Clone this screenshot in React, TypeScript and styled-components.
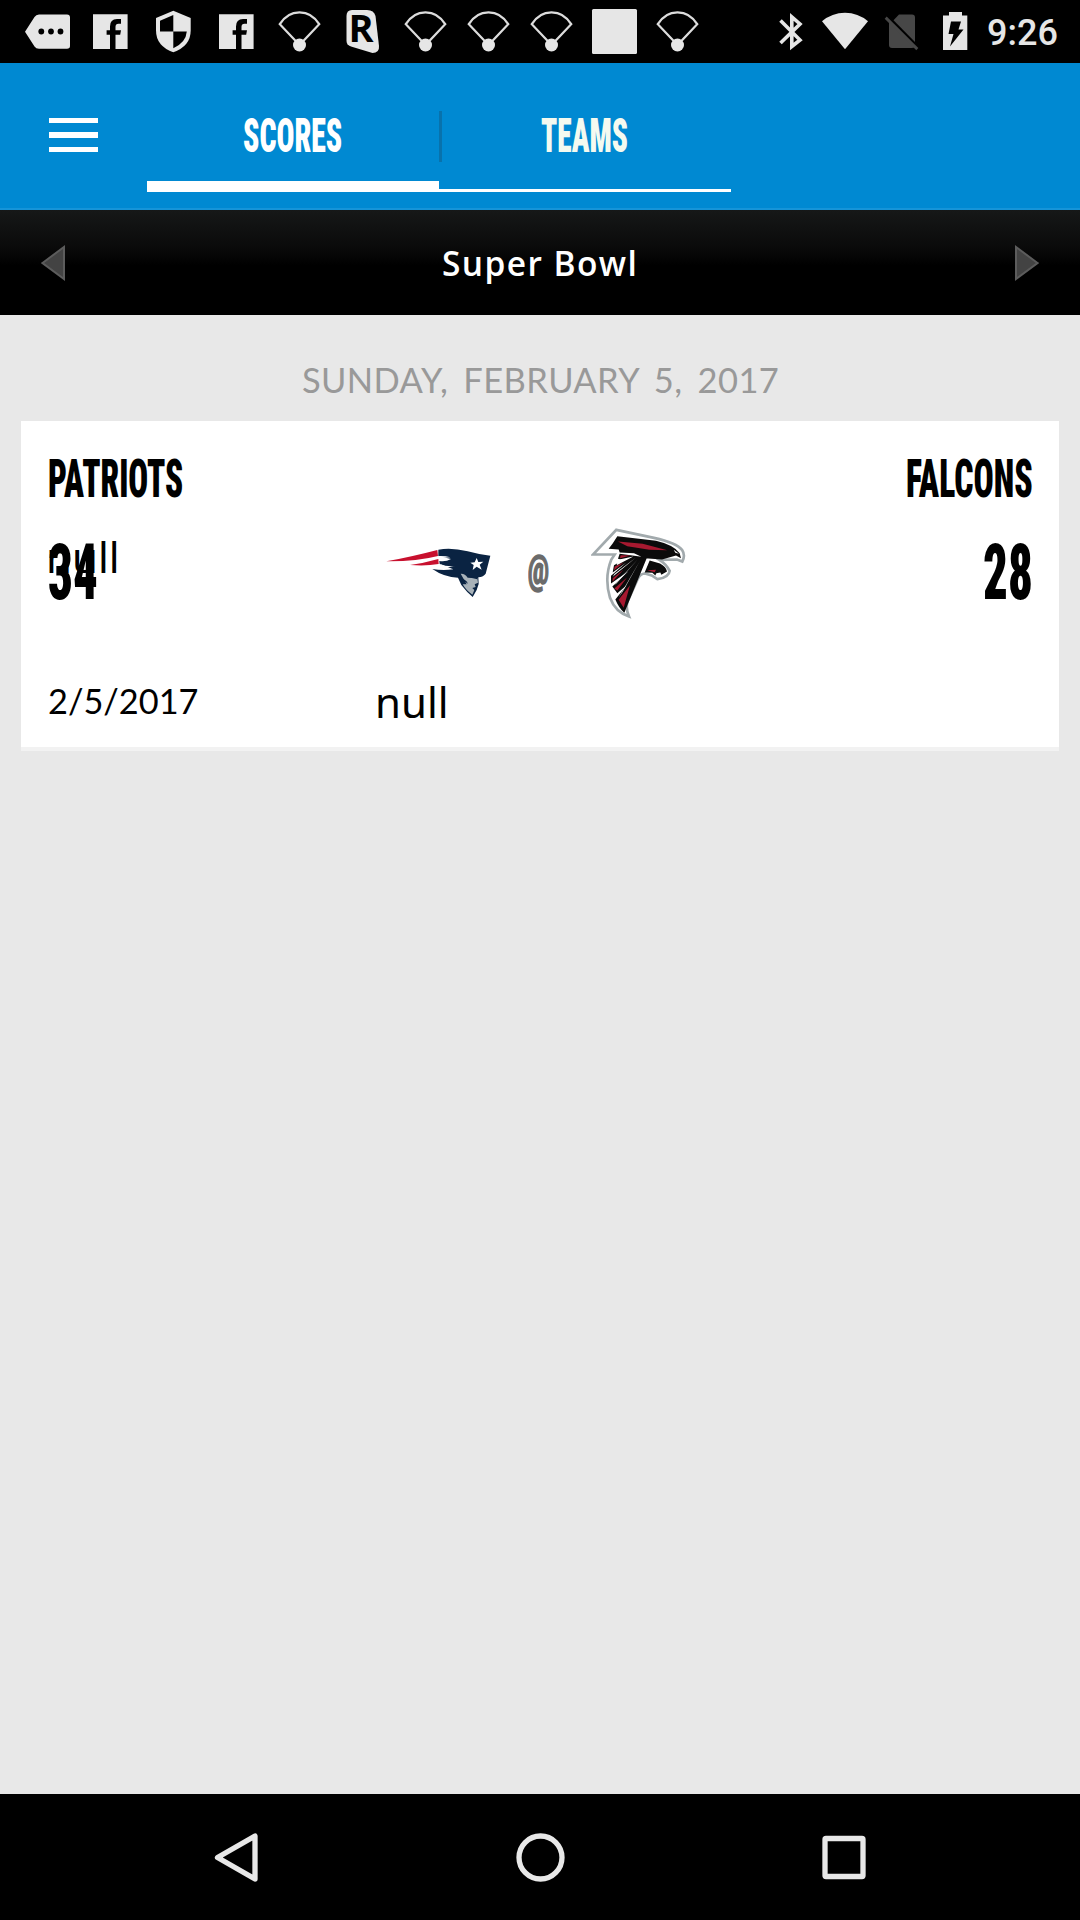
import React, { useLayoutEffect, useRef, useState } from "react";
import styled, { createGlobalStyle } from "styled-components";

const GlobalStyle = createGlobalStyle`
  * { box-sizing: border-box; }
  body { margin: 0; background: #e8e8e8; }
`;

const Screen = styled.div`
  display: flex;
  flex-direction: column;
  width: 1080px;
  height: 1920px;
  overflow: hidden;
  background: #e8e8e8;
  color: #000;
  font-family: Lato, "Open Sans", sans-serif;
`;

/* ---------- condensed text ---------- */

const FitBox = styled.span<{ $width: number }>`
  display: block;
  flex: none;
  width: ${(p) => p.$width}px;
  white-space: nowrap;
`;
const FitInner = styled.span`
  display: inline-block;
  transform-origin: 0 50%;
  vertical-align: top;
`;

/** Squeezes its text horizontally so that it fills the given width. */
function Fit({ width, children }: { width: number; children: string }) {
  const ref = useRef<HTMLSpanElement>(null);
  const [scale, setScale] = useState(1);
  useLayoutEffect(() => {
    if (ref.current) setScale(width / ref.current.offsetWidth);
  }, [width, children]);
  return (
    <FitBox $width={width}>
      <FitInner ref={ref} style={{ transform: `scaleX(${scale})` }}>
        {children}
      </FitInner>
    </FitBox>
  );
}

/* ---------- status bar ---------- */

const StatusBar = styled.div`
  display: flex;
  flex: none;
  justify-content: space-between;
  height: 63px;
  padding: 0 22px 0 16px;
  background: #000;
  color: #e6e6e6;
`;
const StatusGroup = styled.div`
  display: flex;
`;
const StatusIcon = styled.svg`
  display: block;
  flex: none;
  height: 63px;
  fill: #e6e6e6;
`;
const Clock = styled.div`
  margin-left: 19px;
  width: 71px;
  font: 500 37px/66px Roboto, sans-serif;
`;

const Slot = ({ children }: { children: React.ReactNode }) => (
  <StatusIcon width="63" viewBox="0 0 63 63">
    {children}
  </StatusIcon>
);
const MoreIcon = () => (
  <Slot>
    <path d="M9 31.8 18.5 17Q20 14.5 23 14.5H51Q54 14.5 54 17.5V46Q54 48.7 51 48.7H23Q20 48.7 18.5 46.5Z" />
    <g fill="#000">
      <circle cx="25.3" cy="31.5" r="2.9" />
      <circle cx="35" cy="31.5" r="2.9" />
      <circle cx="44.5" cy="31.5" r="2.9" />
    </g>
  </Slot>
);
const FacebookIcon = () => (
  <Slot>
    <path d="M14 14.3H48.6V49H14Z" />
    <path
      fill="#000"
      d="M31 49V34.8H27.6V30.2H31V26.5Q31 19 38 19H42V23.8H39.5Q36.5 23.8 36.5 26.8V30.2H42L41.2 34.8H36.5V49Z"
    />
  </Slot>
);
const ShieldIcon = () => (
  <Slot>
    <path d="M31.3 10.8 48.7 18V30.5Q48.7 46 31.3 52.3Q14 46 14 30.5V18Z" />
    <path fill="#000" d="M31.3 15V31.5H18V20.7ZM31.3 31.5H44.8Q44 42.5 31.3 48.2Z" />
  </Slot>
);
const ConeIcon = () => (
  <Slot>
    <path
      d="M31.5 45 11.8 24.2Q19 12.3 31.5 12.3T51.2 24.2Z"
      fill="none"
      stroke="#dcdcdc"
      strokeWidth="2.3"
    />
    <circle cx="31.5" cy="45" r="6.5" />
  </Slot>
);
const RIcon = () => (
  <Slot>
    <path d="M21 10H36Q43 10 44.5 16L48 46Q48.5 53 41.5 53L20 46.5Q15.5 45 15.5 41V16Q15.5 10 21 10Z" />
    <text x="17.5" y="42" fontFamily="Open Sans" fontWeight="700" fontSize="38" fill="#000">
      R
    </text>
  </Slot>
);
const SquareIcon = () => (
  <Slot>
    <rect x="9" y="9" width="45" height="45" rx="1.5" />
  </Slot>
);

const BluetoothIcon = () => (
  <StatusIcon width="26" viewBox="778 0 26 63">
    <path
      d="M780.5 20.5 800 40 791.8 46.5V17L800 24 780.500 43"
      fill="none"
      stroke="#e6e6e6"
      strokeWidth="3.6"
    />
  </StatusIcon>
);
const WifiIcon = () => (
  <StatusIcon width="46" viewBox="822 0 46 63">
    <path d="M845 49.2 822 21.3Q832 12.8 845 12.8T868 21.3Z" />
  </StatusIcon>
);
const NoSimIcon = () => (
  <StatusIcon width="36" viewBox="884 0 36 63">
    <g fill="#474747">
      <path d="M899 14.5H912Q915 14.5 915 17.5V42L893.5 20.3Z" />
      <path d="M889 21.5 914.5 47Q914 48 911.5 48H892Q889 48 889 45Z" />
      <path d="M886.7 16.5 918.3 48 916.3 50.2 884.7 18.7Z" />
    </g>
  </StatusIcon>
);
const BatteryIcon = () => (
  <StatusIcon width="25" viewBox="943 0 25 63">
    <path d="M943 15.5H949V12H962V15.5H967.3V50H943Z" />
    <path fill="#000" d="M951 21.5H961L958.5 29.5H963.5L950 46.5 953.5 34H948.5Z" />
  </StatusIcon>
);
const Gap = styled.div<{ $w: number }>`
  flex: none;
  width: ${(p) => p.$w}px;
`;

/* ---------- header ---------- */

const Header = styled.header`
  display: flex;
  flex: none;
  height: 147px;
  background: #0089d2;
  border-bottom: 2px solid #1694d8;
`;
const MenuButton = styled.div`
  display: flex;
  flex-direction: column;
  gap: 9px;
  width: 147px;
  padding: 55px 0 0 49px;
`;
const MenuBar = styled.span`
  width: 49px;
  height: 5.3px;
  background: #fff;
`;
const Tab = styled.div<{ $active?: boolean }>`
  display: flex;
  justify-content: center;
  width: 292px;
  height: 129px;
  padding: 43px 1px 0 0;
  border-bottom: ${(p) => (p.$active ? 11 : 3)}px solid #fff;
  color: ${(p) => (p.$active ? "#fff" : "#f4faf0")};
  font: 900 49px/60px Roboto, sans-serif;
  font-stretch: 75%;
`;
const TabDivider = styled.div`
  flex: none;
  width: 3px;
  height: 51px;
  margin: 48px -3px 0 0;
  background: #0872ac;
`;

/* ---------- week picker ---------- */

const WeekBar = styled.div`
  display: flex;
  flex: none;
  align-items: center;
  justify-content: space-between;
  height: 105px;
  padding: 0 41px;
  background: linear-gradient(#161818, #0a0a0a 38px, #000 56px);
`;
const Arrow = styled.svg`
  display: block;
  fill: #434343;
  stroke: #5c5c5c;
  stroke-width: 2;
`;
const WeekTitle = styled.div`
  font: 600 35px/104px "Open Sans", sans-serif;
  letter-spacing: 1.5px;
  color: #fff;
`;

/* ---------- game list ---------- */

const Content = styled.main`
  flex: 1;
  padding: 0 21px;
`;
const DateHeading = styled.div`
  display: flex;
  justify-content: center;
  height: 106px;
  padding-top: 34px;
  color: #999;
  font: 400 35px/60px Lato, sans-serif;
  letter-spacing: 0.4px;
  word-spacing: 6px;
`;
const Card = styled.section`
  display: flex;
  flex-direction: column;
  height: 330px;
  padding: 0 26px 0 27px;
  background: #fff;
  border-bottom: 4px solid #f2f2f2;
`;
const Teams = styled.div`
  display: flex;
  justify-content: space-between;
  padding-top: 28px;
  font: 900 54px/60px Roboto, sans-serif;
  font-stretch: 75%;
`;
const ScoreRow = styled.div`
  display: grid;
  grid-template-columns: 338px auto 1fr;
  align-items: start;
  height: 132px;
  padding-top: 18px;
`;
const Score = styled.div<{ $right?: boolean }>`
  position: relative;
  justify-self: ${(p) => (p.$right ? "end" : "start")};
  padding-top: 6px;
  font: 900 77px/80px Roboto, sans-serif;
  font-stretch: 75%;
`;
const OverlaidLabel = styled.div`
  position: absolute;
  left: -2px;
  top: -0.5px;
  font: 400 42px/60px "Noto Sans", sans-serif;
`;
const Matchup = styled.div`
  display: flex;
  align-items: flex-start;
`;
const PatriotsLogo = styled.svg`
  display: block;
  margin-top: 20px;
`;
const FalconsLogo = styled.svg`
  display: block;
`;
const At = styled.div`
  margin: 14px 42px 0 37px;
  color: #6b6b6b;
  font: 900 40px/60px Roboto, sans-serif;
  -webkit-text-stroke: 1.5px #6b6b6b;
`;
const Details = styled.div`
  display: flex;
  align-items: flex-start;
  padding-top: 29px;
`;
const GameDate = styled.div`
  width: 327px;
  font: 400 35px/60px Lato, sans-serif;
`;
const Network = styled.div`
  padding-top: 2px;
  font: 400 42px/60px "Noto Sans", sans-serif;
`;

/* ---------- navigation bar ---------- */

const NavBar = styled.nav`
  display: flex;
  flex: none;
  align-items: center;
  justify-content: center;
  gap: 244px;
  height: 126px;
  background: #000;
`;
const NavIcon = styled.svg`
  display: block;
  width: 60px;
  height: 60px;
  fill: none;
  stroke: #e8e8e8;
  stroke-width: 5.3;
  stroke-linejoin: round;
`;

export default function App() {
  return (
    <Screen>
      <GlobalStyle />
      <StatusBar>
        <StatusGroup>
          <MoreIcon />
          <FacebookIcon />
          <ShieldIcon />
          <FacebookIcon />
          <ConeIcon />
          <RIcon />
          <ConeIcon />
          <ConeIcon />
          <ConeIcon />
          <SquareIcon />
          <ConeIcon />
        </StatusGroup>
        <StatusGroup>
          <BluetoothIcon />
          <Gap $w={18} />
          <WifiIcon />
          <Gap $w={16} />
          <NoSimIcon />
          <Gap $w={23} />
          <BatteryIcon />
          <Clock>
            <Fit width={71}>9:26</Fit>
          </Clock>
        </StatusGroup>
      </StatusBar>

      <Header>
        <MenuButton>
          <MenuBar />
          <MenuBar />
          <MenuBar />
        </MenuButton>
        <Tab $active>
          <Fit width={99}>SCORES</Fit>
        </Tab>
        <TabDivider />
        <Tab>
          <Fit width={87}>TEAMS</Fit>
        </Tab>
      </Header>

      <WeekBar>
        <Arrow width="25" height="36" viewBox="0 0 25 36">
          <path d="M1.5 18 23 2V34Z" />
        </Arrow>
        <WeekTitle>
          <Fit width={196}>Super Bowl</Fit>
        </WeekTitle>
        <Arrow width="25" height="36" viewBox="0 0 25 36">
          <path d="M23.5 18 2 2V34Z" />
        </Arrow>
      </WeekBar>

      <Content>
        <DateHeading>
          <Fit width={477}>SUNDAY, FEBRUARY 5, 2017</Fit>
        </DateHeading>
        <Card>
          <Teams>
            <Fit width={135}>PATRIOTS</Fit>
            <Fit width={127}>FALCONS</Fit>
          </Teams>
          <ScoreRow>
            <Score>
              <Fit width={50}>34</Fit>
              <OverlaidLabel>null</OverlaidLabel>
            </Score>
            <Matchup>
              <PatriotsLogo width="105" height="51" viewBox="50 112 315 153">
                <path fill="#c8102e" d="M51 155Q120 143 204 121L206 139Q140 156 51 155ZM122 166Q165 160 207 148L208 163Q170 170 122 166Z" />
                <path
                  fill="#0a2342"
                  d="M207 120Q245 112 295 125Q330 135 363 138L349 192Q343 201 327 203L328 223 322 241 310 262Q292 247 276 226L266 204Q225 203 189 178Q220 183 252 179L211 163 210 154Q230 157 245 148L207 139Z"
                />
                <path fill="#fff" d="M207 139Q227 138 243 143L208 146ZM209 162Q235 172 257 169L230 174Z" />
                <path fill="#fff" d="m322 145 5 12 15-1-11 9 6 15-15-9-12 10 3-15-10-7 13-1Z" />
                <path
                  fill="#a8b2b9"
                  d="M274 192Q287 191 295 204L324 205 326 219 316 224 319 232 309 235 315 241 309 255Q290 242 280 224L292 224Z"
                />
                <path fill="#0a2342" d="M271 205Q290 208 296 222L282 213ZM298 203 324 199 324 209 311 206Z" />
              </PatriotsLogo>
              <At>
                <Fit width={21}>@</Fit>
              </At>
              <FalconsLogo width="95" height="92" viewBox="95 52 285 275">
                <path
                  fill="#fff"
                  stroke="#a2aaad"
                  strokeWidth="8"
                  d="M171 60 284 84Q352 99 368 120Q379 137 369 155L353 149 300 150Q320 162 331 183Q329 203 294 208L277 197 257 191Q243 191 235 208L205 274Q198 295 209 320Q168 307 152 264Q134 204 156 149L166 134H101Z"
                />
                <path
                  fill="#0b0b0b"
                  d="M174 79 290 93Q342 105 361 130L365 145 350 137 308 149 256 145 224 130 181 128 178 119 148 117 160 101ZM181 132 263 143 195 309Q180 297 168 269L202 226 174 250 159 230 207 184 155 221V198L200 159 160 188 164 166 190 151 176 147ZM271 152 302 161Q320 170 323 185L306 195 303 188 291 190 288 197 279 189 256 188Z"
                />
                <path
                  fill="#a71930"
                  d="M176 95 250 102 324 121 270 120 204 109ZM184 136 214 137 182 145ZM166 170 193 158 164 181ZM160 205 192 180 160 215ZM165 236 203 203 174 242ZM178 270 212 226 193 294ZM264 181 290 180 286 187Z"
                />
                <path fill="#fff" d="M176 150 222 140 172 166ZM166 192 229 144 160 201ZM164 226 235 149 172 220ZM178 263 242 153 190 246ZM343 120 359 132 348 129Z" />
              </FalconsLogo>
            </Matchup>
            <Score $right>
              <Fit width={50}>28</Fit>
            </Score>
          </ScoreRow>
          <Details>
            <GameDate>
              <Fit width={150}>2/5/2017</Fit>
            </GameDate>
            <Network>null</Network>
          </Details>
        </Card>
      </Content>

      <NavBar>
        <NavIcon viewBox="0 0 60 60">
          <path d="M11.500 30.500 49 9V52Z" />
        </NavIcon>
        <NavIcon viewBox="0 0 60 60">
          <circle cx="30.500" cy="30.500" r="21.500" />
        </NavIcon>
        <NavIcon viewBox="0 0 60 60">
          <rect x="11" y="11.500" width="38" height="38" rx="1" />
        </NavIcon>
      </NavBar>
    </Screen>
  );
}
